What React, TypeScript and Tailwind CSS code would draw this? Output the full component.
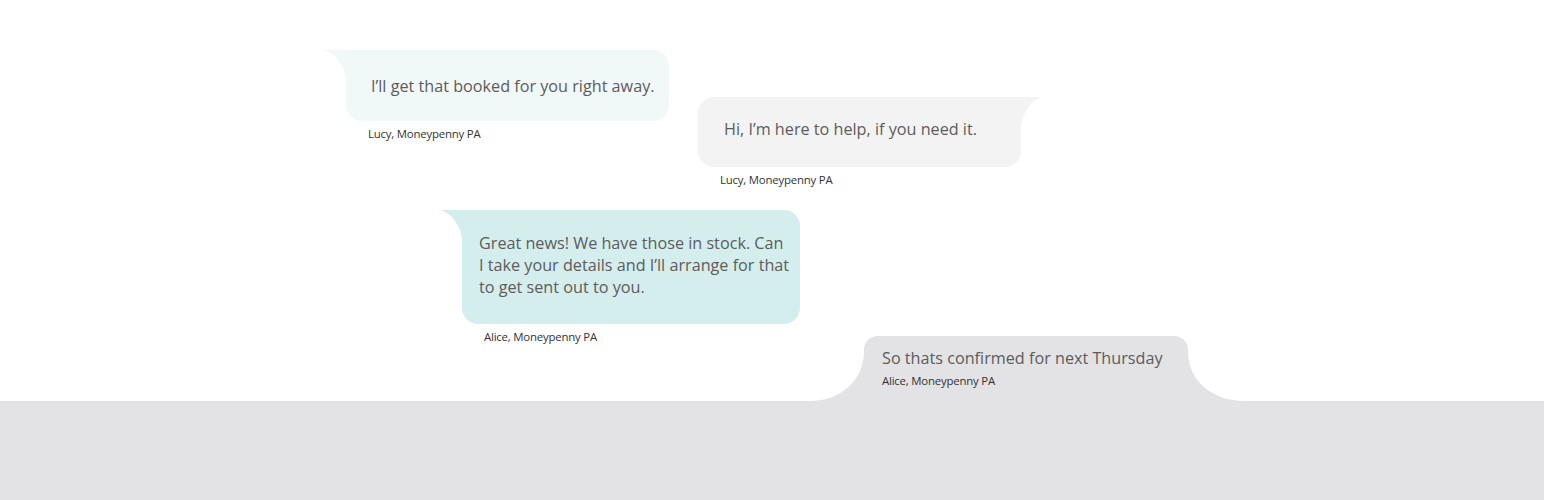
import React from 'react';

const LeftTail: React.FC<{ color: string; w: number; h: number }> = ({ color, w, h }) => (
  <svg className="absolute top-0" style={{ left: -w }} width={w + 1} height={h} viewBox={`0 0 ${w + 1} ${h}`}>
    <path d={`M0 0 H${w + 1} V${h} H${w} C${w} ${h * 0.5} ${w * 0.45} 0 0 0 Z`} fill={color} />
  </svg>
);

const RightTail: React.FC<{ color: string; w: number; h: number }> = ({ color, w, h }) => (
  <svg className="absolute top-0" style={{ right: -w }} width={w + 1} height={h} viewBox={`-1 0 ${w + 1} ${h}`}>
    <path d={`M-1 0 H${w} C${w * 0.55} 0 0 ${h * 0.5} 0 ${h} H-1 Z`} fill={color} />
  </svg>
);

const Caption: React.FC<{ children: React.ReactNode }> = ({ children }) => (
  <p className="mt-[5px] pl-[22px] text-[11.4px] leading-[16px] text-[#333] tracking-[-0.2px] whitespace-nowrap">
    {children}
  </p>
);

export default function App() {
  return (
    <div className="w-[1544px] h-[500px] bg-white font-['Open_Sans',sans-serif] text-[#5c5c5c]">
      <div className="h-[401px] pt-[50px] flex flex-col items-start">
        {/* Lucy 1 */}
        <div className="ml-[346px] w-[323px]">
          <div className="relative h-[71px] bg-[#f1f8f8] rounded-[16px] rounded-tl-none flex items-center pl-[25px] pt-[1px] text-[16.2px] whitespace-nowrap">
            <LeftTail color="#f1f8f8" w={24} h={31} />
            I’ll get that booked for you right away.
          </div>
          <Caption>Lucy, Moneypenny PA</Caption>
        </div>

        {/* Lucy 2 */}
        <div className="ml-[698px] mt-[-45px] w-[323px]">
          <div className="relative h-[70px] bg-[#f3f3f3] rounded-[16px] rounded-tr-none flex items-center pl-[26px] pb-[6px] text-[16.2px] whitespace-nowrap">
            <RightTail color="#f3f3f3" w={22} h={33} />
            Hi, I’m here to help, if you need it.
          </div>
          <Caption>Lucy, Moneypenny PA</Caption>
        </div>

        {/* Alice 1 */}
        <div className="ml-[462px] mt-[22px] w-[338px]">
          <div className="relative h-[114px] bg-[#d4eeed] rounded-[16px] rounded-tl-none pl-[17px] pt-[22px] text-[16.2px] leading-[22px]">
            <LeftTail color="#d4eeed" w={24} h={31} />
            <span className="block whitespace-nowrap">Great news! We have those in stock. Can</span>
            <span className="block whitespace-nowrap">I take your details and I’ll arrange for that</span>
            <span className="block whitespace-nowrap">to get sent out to you.</span>
          </div>
          <Caption>Alice, Moneypenny PA</Caption>
        </div>

        {/* Alice 2, joined to the footer band */}
        <div className="ml-[864px] mt-[-9px] w-[324px] h-[65px] relative bg-[#e3e3e5] rounded-t-[14px] pl-[18px] pt-[11px]">
          <svg className="absolute bottom-0 left-[-54px]" width="55" height="50" viewBox="0 0 55 50">
            <path d="M54 0 C54 30 30 50 0 50 L55 50 L55 0 Z" fill="#e3e3e5" />
          </svg>
          <svg className="absolute bottom-0 right-[-57px]" width="58" height="50" viewBox="-1 0 58 50">
            <path d="M0 0 C0 30 24 50 57 50 L-1 50 L-1 0 Z" fill="#e3e3e5" />
          </svg>
          <p className="text-[16.2px] leading-[22px] whitespace-nowrap">So thats confirmed for next Thursday</p>
          <p className="mt-[4px] text-[11.4px] leading-[16px] text-[#333] tracking-[-0.2px] whitespace-nowrap">Alice, Moneypenny PA</p>
        </div>
      </div>
      <div className="h-[99px] bg-[#e3e3e5]" />
    </div>
  );
}
